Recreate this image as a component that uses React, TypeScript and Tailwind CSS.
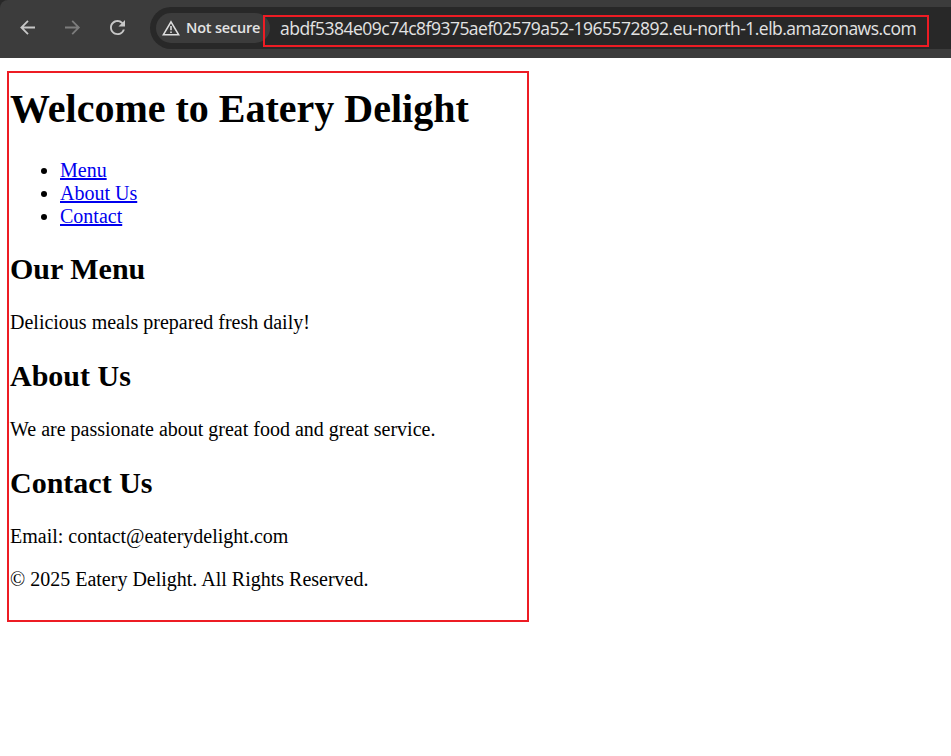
import React from 'react';

const links = ['Menu', 'About Us', 'Contact'];

function Toolbar() {
  return (
    <div className="bg-[#282828]">
      <header className="flex h-[58px] items-start rounded-tl-[8px] bg-[#3c3c3c] pt-[7px]">
        <div className="flex h-[41px] w-[150px] shrink-0 items-center pl-[20px]">
          <svg width="16" height="15" viewBox="0 0 16 15" fill="none" stroke="#c7c7c7" strokeWidth="1.8">
            <path d="M15 7.5H1.6M8 .9 1.4 7.5 8 14.1" />
          </svg>
          <svg className="ml-[29px]" width="16" height="15" viewBox="0 0 16 15" fill="none" stroke="#7c7c7c" strokeWidth="1.8">
            <path d="M0 7.5h13.6M7.2.9l6.6 6.6-6.6 6.6" />
          </svg>
          <svg className="ml-[29px]" width="15" height="15" viewBox="4 4 16 16" fill="#c7c7c7">
            <path d="M17.65 6.35A7.96 7.96 0 0 0 12 4c-4.42 0-7.99 3.58-7.99 8s3.57 8 7.99 8c3.73 0 6.84-2.55 7.73-6h-2.08A5.99 5.99 0 0 1 12 18c-3.31 0-6-2.69-6-6s2.69-6 6-6c1.66 0 3.14.69 4.22 1.78L13 11h7V4z" />
          </svg>
        </div>
        <div className="flex h-[42px] min-w-0 flex-1 items-center rounded-l-[21px] bg-[#282828] pl-[6px]">
          <div className="flex h-[30px] w-[114px] shrink-0 items-center rounded-full bg-[#3c3c3c] pl-[6px]">
            <svg className="shrink-0" width="18" height="16" viewBox="0 0 18 16" fill="none" stroke="#dedede" strokeWidth="1.6">
              <path d="M9 1.8 16.6 14.7H1.4Z" />
              <path d="M9 6v4.3M9 11.4v1.7" />
            </svg>
            <span className="ml-[6px] whitespace-nowrap font-['Open_Sans','Noto_Sans',sans-serif] text-[14.5px] font-semibold leading-5 tracking-[-0.2px] text-[#e3e3e3]">
              Not secure
            </span>
          </div>
          <div className="relative z-10 -ml-[7px] mt-[6px] flex h-[32px] w-[666px] shrink-0 items-center border-2 border-[#ed1c24] pl-[15px]">
            <span className="-mt-[6px] whitespace-nowrap font-['Open_Sans','Noto_Sans',sans-serif] text-[17.5px] leading-6 tracking-[-0.51px] text-[#e3e3e3]">
              abdf5384e09c74c8f9375aef02579a52-1965572892.eu-north-1.elb.amazonaws.com
            </span>
          </div>
        </div>
      </header>
    </div>
  );
}

function Section({ title, text }: { title: string; text: string }) {
  return (
    <section>
      <h2 className="text-[30px] font-bold leading-[34px]">{title}</h2>
      <p className="mt-[25px]">{text}</p>
    </section>
  );
}

export default function App() {
  return (
    <div className="h-[756px] w-[951px] overflow-hidden bg-white">
      <Toolbar />
      <main className="ml-[7px] mt-[13px] h-[551px] w-[522px] border-2 border-[#ed1c24] pl-px pt-[13px] font-['Liberation_Serif','Times_New_Roman',serif] text-[20px] leading-[23px] text-black">
        <h1 className="text-[40px] font-bold leading-[46px]">Welcome to Eatery Delight</h1>
        <ul className="mt-[27px] list-disc pl-[50px]">
          {links.map((link) => (
            <li key={link}>
              <a href="#" className="text-[#0000ee] underline decoration-2 underline-offset-[1px]">{link}</a>
            </li>
          ))}
        </ul>
        <div className="mt-[24px] flex flex-col gap-[25px]">
          <Section title="Our Menu" text="Delicious meals prepared fresh daily!" />
          <Section title="About Us" text="We are passionate about great food and great service." />
          <Section title="Contact Us" text="Email: contact@eaterydelight.com" />
        </div>
        <footer className="mt-[20px]">© 2025 Eatery Delight. All Rights Reserved.</footer>
      </main>
    </div>
  );
}
